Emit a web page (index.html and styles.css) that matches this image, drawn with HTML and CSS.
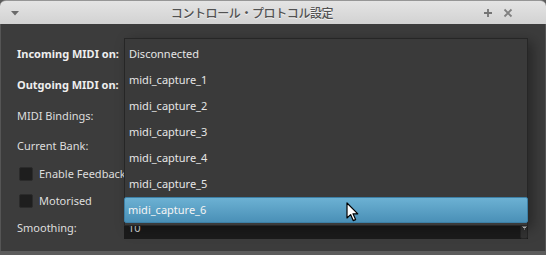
FILE: index.html
```html
<!DOCTYPE html>
<html>
<head>
<meta charset="utf-8">
<link rel="stylesheet" href="styles.css">
</head>
<body>
<div class="window">
  <div class="titlebar">
    <span class="tb-menu"><svg width="8" height="5" viewBox="0 0 8 5"><path d="M0 0 H8 L4 4.5 Z" fill="#6a6a6a"/></svg></span>
    <span class="title">コントロール・プロトコル設定</span>
    <span class="tb-btns">
      <svg width="10" height="10" viewBox="0 0 10 10"><path d="M5 1 V9 M1 5 H9" stroke="#747474" stroke-width="1.8"/></svg>
      <svg width="10" height="10" viewBox="0 0 10 10"><path d="M1.5 1.5 L8.5 8.5 M8.5 1.5 L1.5 8.5" stroke="#808080" stroke-width="1.8"/></svg>
    </span>
  </div>
  <div class="content">
    <div class="row r1"><span class="label bold">Incoming MIDI on:</span><span class="ctl"></span></div>
    <div class="row r2"><span class="label bold">Outgoing MIDI on:</span><span class="ctl"></span></div>
    <div class="row r3"><span class="label">MIDI Bindings:</span><span class="ctl"></span></div>
    <div class="row r4"><span class="label">Current Bank:</span><span class="ctl"></span></div>
    <div class="row check"><span class="box"></span><span class="label">Enable Feedback</span></div>
    <div class="row check"><span class="box"></span><span class="label">Motorised</span></div>
    <div class="row r7"><span class="label">Smoothing:</span>
      <span class="spin"><span class="spin-text">10</span><span class="spin-btn"><svg width="5" height="4" viewBox="0 0 5 4"><path d="M0 0 H5 M1 1.5 H4 M2 3 H3" stroke="#cfcfcf" stroke-width="1"/></svg></span></span>
    </div>
  </div>
  <div class="popup">
    <div class="item">Disconnected</div>
    <div class="item">midi_capture_1</div>
    <div class="item">midi_capture_2</div>
    <div class="item">midi_capture_3</div>
    <div class="item">midi_capture_4</div>
    <div class="item">midi_capture_5</div>
    <div class="item active">midi_capture_6</div>
  </div>
  <svg class="cursor" width="14" height="20" viewBox="0 0 14 20"><path d="M1 1 L1 16 L4.6 12.6 L7.2 18.6 L9.6 17.6 L7 11.8 L11.8 11.8 Z" fill="#ffffff" stroke="#000000" stroke-width="1.2" stroke-linejoin="round"/></svg>
</div>
</body>
</html>
```
FILE: styles.css
```css
html, body {
  margin: 0;
  padding: 0;
  background: #5c5c5c;
}
body {
  width: 546px;
  height: 255px;
  overflow: hidden;
  font-family: "Noto Sans", "Open Sans", sans-serif;
}
.window {
  position: relative;
  width: 546px;
  height: 251px;
  display: flex;
  flex-direction: column;
}
.titlebar {
  height: 23px;
  border-top: 1px solid #969696;
  border-radius: 6px 6px 0 0;
  background: linear-gradient(#e4e4e4, #d2d2d2);
  display: flex;
  align-items: center;
  padding: 0 10px;
  position: relative;
}
.tb-menu {
  display: flex;
  margin-left: 1px;
  margin-top: 2px;
}
.title {
  flex: 1;
  text-align: center;
  font-family: "Noto Sans CJK JP", sans-serif;
  font-size: 12px;
  font-weight: 500;
  color: #525252;
  text-shadow: 0 1px 0 #f4f4f4;
  letter-spacing: -0.4px;
  padding-left: 2px;
}
.tb-btns {
  display: flex;
  gap: 10px;
  margin-right: 23px;
}
.content {
  flex: 1;
  background: #3c3c3c;
  border-left: 1px solid #555555;
  border-right: 1px solid #555555;
  padding: 14px 0 0 16px;
  display: flex;
  flex-direction: column;
}
.row {
  display: flex;
  align-items: center;
  height: 31px;
}
.r4 { height: 29px; }
.check { height: 27px; }
.r7 { height: 27px; }
.label {
  width: 107px;
  font-size: 11px;
  color: #dedede;
  white-space: nowrap;
}
.bold {
  font-weight: bold;
  color: #eeeeee;
}
.ctl {
  width: 404px;
}
.check .box {
  width: 12px;
  height: 12px;
  background: #1e1e1e;
  border: 1px solid #2b2b2b;
  border-radius: 2px;
  margin-left: 2px;
  margin-right: 6px;
}
.check .label {
  width: auto;
}
.spin {
  width: 404px;
  height: 22px;
  display: flex;
  background: #1b1b1b;
  box-sizing: border-box;
}
.spin-text {
  flex: 1;
  font-size: 11px;
  color: #dcdcdc;
  padding-left: 4px;
  line-height: 22px;
}
.spin-btn {
  width: 6px;
  background: #333333;
  border: 1px solid #262626;
  border-radius: 0 0 2px 2px;
  display: flex;
  align-items: center;
  justify-content: center;
  overflow: hidden;
}
.popup {
  position: absolute;
  left: 124px;
  top: 38px;
  width: 402px;
  padding: 2px 0;
  background: #3a3a3a;
  border: 1px solid #262626;
  box-shadow: 5px 3px 12px rgba(0, 0, 0, 0.35);
}
.item {
  height: 26px;
  line-height: 26px;
  padding-left: 4px;
  font-size: 11px;
  color: #e6e6e6;
  box-sizing: border-box;
}
.item.active {
  background: linear-gradient(#6cb1d3, #4a90b7);
  border: 1px solid #3d80a6;
  border-radius: 2px;
  line-height: 24px;
  padding-left: 3px;
  margin: 0 -1px;
  color: #f4f4f4;
}
.cursor {
  position: absolute;
  left: 346px;
  top: 202px;
}
```
